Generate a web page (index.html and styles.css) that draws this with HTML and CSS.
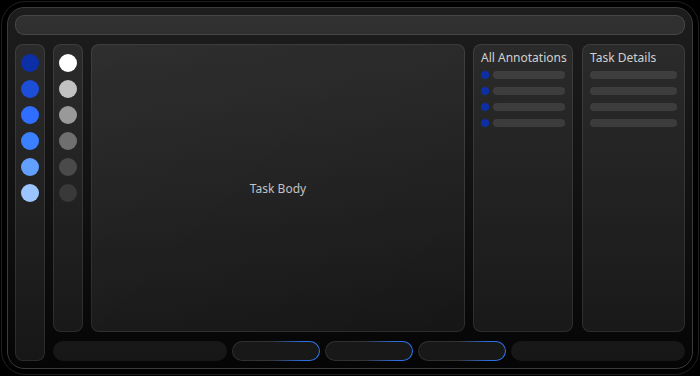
FILE: index.html
```html
<!DOCTYPE html>
<html>
<head>
<meta charset="utf-8">
<link rel="stylesheet" href="styles.css">
</head>
<body>
<div class="shell">
  <div class="frame">
    <div class="topbar"></div>
    <div class="main">
      <div class="col palette">
        <span class="dot b1"></span>
        <span class="dot b2"></span>
        <span class="dot b3"></span>
        <span class="dot b4"></span>
        <span class="dot b5"></span>
        <span class="dot b6"></span>
      </div>
      <div class="right">
        <div class="upper">
          <div class="col palette">
            <span class="dot g1"></span>
            <span class="dot g2"></span>
            <span class="dot g3"></span>
            <span class="dot g4"></span>
            <span class="dot g5"></span>
            <span class="dot g6"></span>
          </div>
          <div class="panel body">Task Body</div>
          <div class="panel side">
            <div class="title">All Annotations</div>
            <div class="rows">
              <div class="row"><span class="mark"></span><span class="bar"></span></div>
              <div class="row"><span class="mark"></span><span class="bar"></span></div>
              <div class="row"><span class="mark"></span><span class="bar"></span></div>
              <div class="row"><span class="mark"></span><span class="bar"></span></div>
            </div>
          </div>
          <div class="panel side details">
            <div class="title">Task Details</div>
            <div class="rows">
              <div class="row"><span class="bar"></span></div>
              <div class="row"><span class="bar"></span></div>
              <div class="row"><span class="bar"></span></div>
              <div class="row"><span class="bar"></span></div>
            </div>
          </div>
        </div>
        <div class="bottom">
          <div class="pill wide"></div>
          <div class="pill btn"></div>
          <div class="pill btn"></div>
          <div class="pill btn"></div>
          <div class="pill wide"></div>
        </div>
      </div>
    </div>
  </div>
</div>
</body>
</html>
```

FILE: styles.css
```css
* { box-sizing: border-box; }
html, body { margin: 0; padding: 0; background: #000; }
body {
  width: 700px;
  height: 376px;
  padding: 1px;
  font-family: "Noto Sans", "Open Sans", sans-serif;
}
.shell {
  width: 698px;
  height: 374px;
  border: 1px solid #1f1f1f;
  border-radius: 24px;
  padding: 5px;
  background: #000;
}
.frame {
  width: 686px;
  height: 362px;
  border: 1px solid #3a3a3a;
  border-radius: 17px;
  padding: 7px;
  background: linear-gradient(180deg, #1d1d1d 0%, #111 55%, #050505 100%);
  display: flex;
  flex-direction: column;
  gap: 9px;
}
.topbar {
  height: 20px;
  flex: none;
  border-radius: 9px;
  background: rgba(255,255,255,0.09);
  border: 1px solid rgba(255,255,255,0.11);
}
.main {
  flex: 1;
  display: flex;
  gap: 8px;
  min-height: 0;
}
.col {
  width: 30px;
  flex: none;
  border-radius: 8px;
  background: rgba(255,255,255,0.07);
  border: 1px solid rgba(255,255,255,0.09);
  display: flex;
  flex-direction: column;
  align-items: center;
  padding-top: 9px;
  gap: 8px;
}
.dot {
  width: 18px;
  height: 18px;
  border-radius: 50%;
  display: block;
}
.b1 { background: #0c2fa8; }
.b2 { background: #1d4ed8; }
.b3 { background: #2f6eff; }
.b4 { background: #3a80ff; }
.b5 { background: #62a0ff; }
.b6 { background: #9cc4ff; }
.g1 { background: #ffffff; }
.g2 { background: #c2c2c2; }
.g3 { background: #999999; }
.g4 { background: #6f6f6f; }
.g5 { background: #4a4a4a; }
.g6 { background: #393939; }
.right {
  flex: 1;
  display: flex;
  flex-direction: column;
  gap: 9px;
}
.upper {
  flex: 1;
  display: flex;
  gap: 8px;
}
.panel {
  border-radius: 8px;
  background: rgba(255,255,255,0.07);
  border: 1px solid rgba(255,255,255,0.09);
}
.body {
  width: 374px;
  flex: none;
  display: flex;
  align-items: center;
  justify-content: center;
  color: #c2c2c2;
  font-size: 12px;
  background: linear-gradient(135deg, rgba(255,255,255,0.09), rgba(255,255,255,0.06));
}
.side {
  width: 100px;
  flex: none;
  padding: 4px 7px;
}
.details {
  flex: 1;
  width: auto;
  margin-left: 1px;
}
.title {
  color: #d0d0d0;
  font-size: 12px;
  line-height: 18px;
  white-space: nowrap;
}
.rows {
  margin-top: 4px;
  display: flex;
  flex-direction: column;
  gap: 8px;
}
.row {
  display: flex;
  align-items: center;
  gap: 4px;
  height: 8px;
}
.mark {
  width: 8px;
  height: 8px;
  border-radius: 50%;
  background: #0c2fa8;
  flex: none;
}
.bar {
  flex: 1;
  height: 8px;
  border-radius: 4px;
  background: rgba(255,255,255,0.1);
}
.bottom {
  height: 20px;
  flex: none;
  display: flex;
  gap: 5px;
}
.pill {
  height: 20px;
  border-radius: 10px;
  background: rgba(255,255,255,0.07);
}
.wide { flex: 1; }
.btn {
  width: 88px;
  flex: none;
  border: 1px solid transparent;
  background:
    linear-gradient(#181818, #181818) padding-box,
    linear-gradient(90deg, #2e2e2e 0%, #333 45%, #2a6de0 80%, #2f74ee 100%) border-box;
}
```
